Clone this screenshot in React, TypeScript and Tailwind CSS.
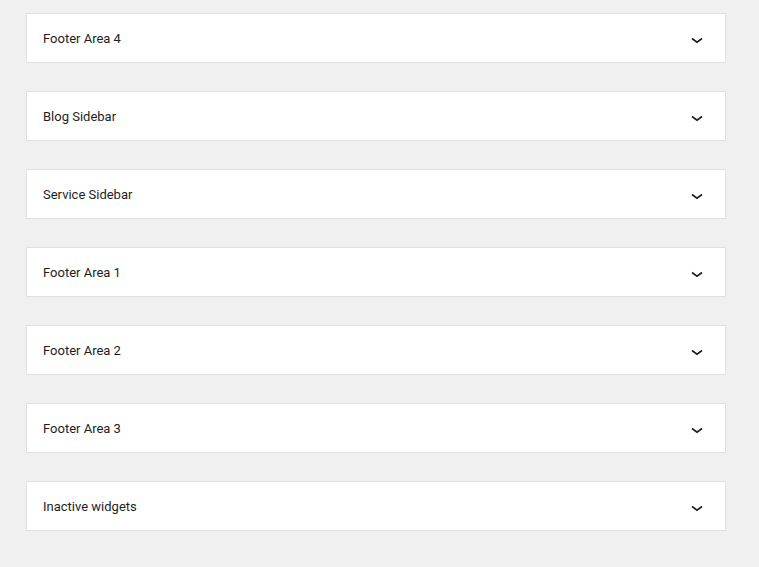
const areas = [
  "Footer Area 4",
  "Blog Sidebar",
  "Service Sidebar",
  "Footer Area 1",
  "Footer Area 2",
  "Footer Area 3",
  "Inactive widgets",
];

const Chevron = () => (
  <svg className="w-[12px] h-[8px]" viewBox="0 0 12 8" fill="none" xmlns="http://www.w3.org/2000/svg">
    <path d="M1 2.5 6 6.2l5-3.7" stroke="#1e1e1e" strokeWidth="1.6" />
  </svg>
);

const App = () => {
  return (
    <div className="min-h-[567px] bg-[#f0f0f0] pt-[13px] pl-[26px] pr-[33px] pb-[36px] font-['Roboto',sans-serif]">
      <div className="flex flex-col gap-[28px]">
        {areas.map((name) => (
          <div
            key={name}
            className="h-[50px] w-[700px] bg-white border border-[#e0e0e0] flex items-center justify-between pl-[16px] pr-[22px]"
          >
            <h2 className="text-[13px] text-[#1e1e1e] leading-none">{name}</h2>
            <button type="button" className="flex items-center justify-center pt-[4px]">
              <Chevron />
            </button>
          </div>
        ))}
      </div>
    </div>
  );
};

export default App;
